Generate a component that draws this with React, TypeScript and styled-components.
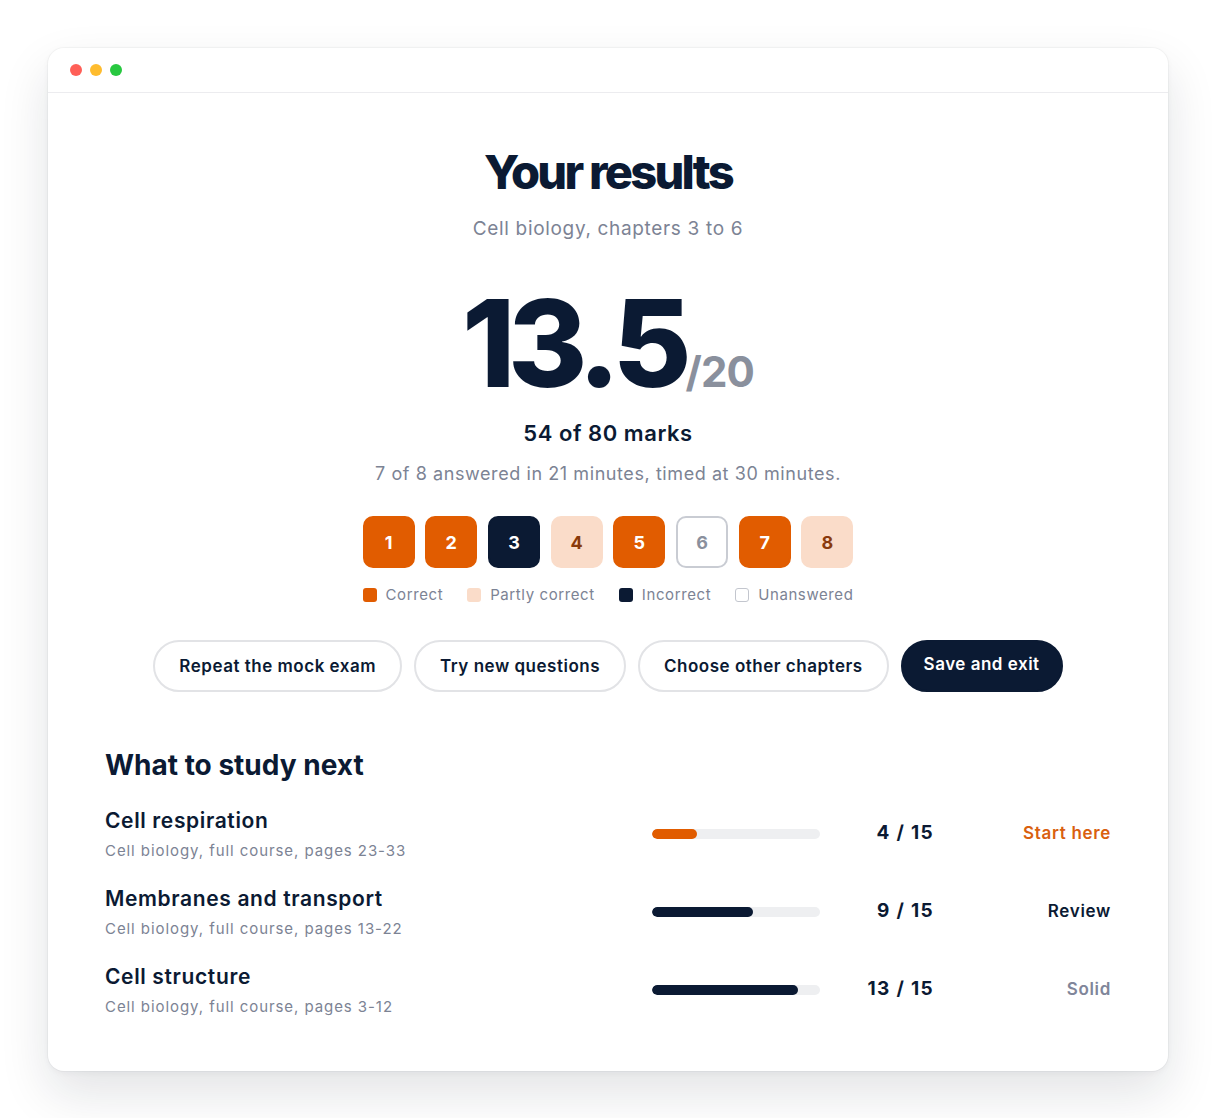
import React from "react";
import styled, { createGlobalStyle } from "styled-components";

const navy = "#0b1a33";
const orange = "#e15c00";
const peach = "#fadcc9";
const grey = "#7c8394";

const GlobalStyle = createGlobalStyle`
  html, body {
    margin: 0;
    padding: 0;
    background: #ffffff;
    font-family: Inter, "Noto Sans", "Liberation Sans", sans-serif;
    color: ${navy};
    -webkit-font-smoothing: antialiased;
  }
  * { box-sizing: border-box; }
`;

const Page = styled.div`
  padding: 48px;
  min-height: 1118px;
`;

const Window = styled.div`
  width: 1120px;
  background: #fff;
  border-radius: 16px;
  box-shadow: 0 22px 50px rgba(15, 23, 42, 0.12), 0 2px 6px rgba(15, 23, 42, 0.04),
    0 0 0 1px rgba(15, 23, 42, 0.03);
  overflow: hidden;
`;

const TitleBar = styled.div`
  height: 45px;
  display: flex;
  align-items: center;
  gap: 8px;
  padding-left: 22px;
  border-bottom: 1px solid #ececef;
`;

const Dot = styled.span<{ $color: string }>`
  width: 12px;
  height: 12px;
  border-radius: 50%;
  background: ${(p) => p.$color};
`;

const Content = styled.div`
  padding: 51px 57px 53px;
`;

const Hero = styled.section`
  display: flex;
  flex-direction: column;
  align-items: center;
  text-align: center;
`;

const Title = styled.h1`
  margin: 0;
  font-size: 47px;
  line-height: 56px;
  font-weight: 800;
  letter-spacing: -0.058em;
`;

const Subtitle = styled.p`
  margin: 16px 0 0;
  font-size: 19px;
  line-height: 26px;
  color: ${grey};
  letter-spacing: 0.035em;
`;

const Score = styled.div`
  margin-top: 41px;
  display: flex;
  align-items: baseline;
  line-height: 1;
`;

const ScoreValue = styled.span`
  font-size: 121px;
  font-weight: 800;
  letter-spacing: -0.06em;
`;

const ScoreMax = styled.span`
  font-size: 42px;
  font-weight: 700;
  color: #8a909d;
  letter-spacing: -0.02em;
  margin-left: 1px;
`;

const Marks = styled.div`
  margin-top: 15px;
  font-size: 22px;
  line-height: 28px;
  font-weight: 600;
  letter-spacing: 0.025em;
`;

const Timing = styled.div`
  margin-top: 15px;
  font-size: 18px;
  line-height: 24px;
  color: ${grey};
  letter-spacing: 0.032em;
`;

type Status = "correct" | "partial" | "incorrect" | "unanswered";

const boxStyles: Record<Status, { bg: string; fg: string; border: string }> = {
  correct: { bg: orange, fg: "#fff", border: orange },
  partial: { bg: peach, fg: "#8a3a0c", border: peach },
  incorrect: { bg: navy, fg: "#fff", border: navy },
  unanswered: { bg: "#fff", fg: "#8a909d", border: "#c9ccd3" },
};

const Boxes = styled.div`
  margin-top: 30px;
  display: flex;
  gap: 10.7px;
`;

const QBox = styled.div<{ $status: Status }>`
  width: 52px;
  height: 52px;
  border-radius: 10px;
  display: flex;
  align-items: center;
  justify-content: center;
  font-size: 18px;
  font-weight: 700;
  background: ${(p) => boxStyles[p.$status].bg};
  color: ${(p) => boxStyles[p.$status].fg};
  border: 2px solid ${(p) => boxStyles[p.$status].border};
`;

const Legend = styled.div`
  margin-top: 17px;
  display: flex;
  gap: 24px;
  font-size: 15px;
  line-height: 20px;
  color: ${grey};
  letter-spacing: 0.04em;
`;

const LegendItem = styled.span`
  display: flex;
  align-items: center;
  gap: 9px;
`;

const Swatch = styled.span<{ $status: Status }>`
  width: 14px;
  height: 14px;
  border-radius: 3px;
  background: ${(p) => boxStyles[p.$status].bg};
  border: ${(p) => (p.$status === "unanswered" ? "1.5px solid #c3c6ce" : "none")};
`;

const Actions = styled.div`
  margin-top: 35px;
  display: flex;
  gap: 12px;
`;

const Button = styled.button<{ $primary?: boolean }>`
  height: 52px;
  padding: 0 ${(p) => (p.$primary ? "21px" : "24px")};
  border-radius: 26px;
  font-family: inherit;
  font-size: 17px;
  font-weight: 600;
  letter-spacing: 0.03em;
  cursor: pointer;
  background: ${(p) => (p.$primary ? navy : "#fff")};
  color: ${(p) => (p.$primary ? "#fff" : navy)};
  border: 2px solid ${(p) => (p.$primary ? navy : "#e2e3e6")};
  padding-bottom: ${(p) => (p.$primary ? "4px" : "0")};
`;

const Study = styled.section`
  margin-top: 56px;
`;

const StudyHeading = styled.h2`
  margin: 0 0 25px;
  font-size: 28px;
  line-height: 34px;
  font-weight: 700;
  letter-spacing: 0;
`;

const Rows = styled.div`
  display: flex;
  flex-direction: column;
  gap: 23px;
`;

const Row = styled.div`
  display: grid;
  grid-template-columns: 547px 168px 114px 1fr;
  align-items: center;
`;

const TopicTitle = styled.div`
  font-size: 21px;
  line-height: 28px;
  font-weight: 600;
  letter-spacing: 0.03em;
`;

const TopicMeta = styled.div`
  margin-top: 5px;
  font-size: 15px;
  line-height: 22px;
  color: ${grey};
  letter-spacing: 0.062em;
`;

const Track = styled.div`
  height: 10px;
  border-radius: 5px;
  background: #eeeff1;
  overflow: hidden;
  margin-top: -2px;
`;

const Fill = styled.div<{ $color: string }>`
  height: 100%;
  border-radius: 5px;
  background: ${(p) => p.$color};
`;

const Count = styled.div`
  text-align: right;
  font-size: 19px;
  font-weight: 700;
  letter-spacing: 0.07em;
  margin-top: -4px;
`;

const Verdict = styled.div<{ $color: string }>`
  text-align: right;
  font-size: 17px;
  font-weight: 600;
  letter-spacing: 0.04em;
  color: ${(p) => p.$color};
  margin-top: -4px;
`;

const questions: Status[] = [
  "correct",
  "correct",
  "incorrect",
  "partial",
  "correct",
  "unanswered",
  "correct",
  "partial",
];

const legend: { status: Status; label: string }[] = [
  { status: "correct", label: "Correct" },
  { status: "partial", label: "Partly correct" },
  { status: "incorrect", label: "Incorrect" },
  { status: "unanswered", label: "Unanswered" },
];

const topics = [
  {
    title: "Cell respiration",
    meta: "Cell biology, full course, pages 23-33",
    score: 4,
    bar: orange,
    verdict: "Start here",
    verdictColor: "#d9600f",
  },
  {
    title: "Membranes and transport",
    meta: "Cell biology, full course, pages 13-22",
    score: 9,
    bar: navy,
    verdict: "Review",
    verdictColor: navy,
  },
  {
    title: "Cell structure",
    meta: "Cell biology, full course, pages 3-12",
    score: 13,
    bar: navy,
    verdict: "Solid",
    verdictColor: "#80869a",
  },
];

export default function App() {
  return (
    <>
      <GlobalStyle />
      <Page>
        <Window>
          <TitleBar>
            <Dot $color="#ff5f57" />
            <Dot $color="#febc2e" />
            <Dot $color="#28c840" />
          </TitleBar>
          <Content>
            <Hero>
              <Title>Your results</Title>
              <Subtitle>Cell biology, chapters 3 to 6</Subtitle>
              <Score>
                <ScoreValue>13.5</ScoreValue>
                <ScoreMax>/20</ScoreMax>
              </Score>
              <Marks>54 of 80 marks</Marks>
              <Timing>7 of 8 answered in 21 minutes, timed at 30 minutes.</Timing>
              <Boxes>
                {questions.map((s, i) => (
                  <QBox key={i} $status={s}>
                    {i + 1}
                  </QBox>
                ))}
              </Boxes>
              <Legend>
                {legend.map((l) => (
                  <LegendItem key={l.label}>
                    <Swatch $status={l.status} />
                    {l.label}
                  </LegendItem>
                ))}
              </Legend>
              <Actions>
                <Button>Repeat the mock exam</Button>
                <Button>Try new questions</Button>
                <Button>Choose other chapters</Button>
                <Button $primary>Save and exit</Button>
              </Actions>
            </Hero>
            <Study>
              <StudyHeading>What to study next</StudyHeading>
              <Rows>
                {topics.map((t) => (
                  <Row key={t.title}>
                    <div>
                      <TopicTitle>{t.title}</TopicTitle>
                      <TopicMeta>{t.meta}</TopicMeta>
                    </div>
                    <Track>
                      <Fill $color={t.bar} style={{ width: `${(t.score / 15) * 100}%` }} />
                    </Track>
                    <Count>{t.score} / 15</Count>
                    <Verdict $color={t.verdictColor}>{t.verdict}</Verdict>
                  </Row>
                ))}
              </Rows>
            </Study>
          </Content>
        </Window>
      </Page>
    </>
  );
}
